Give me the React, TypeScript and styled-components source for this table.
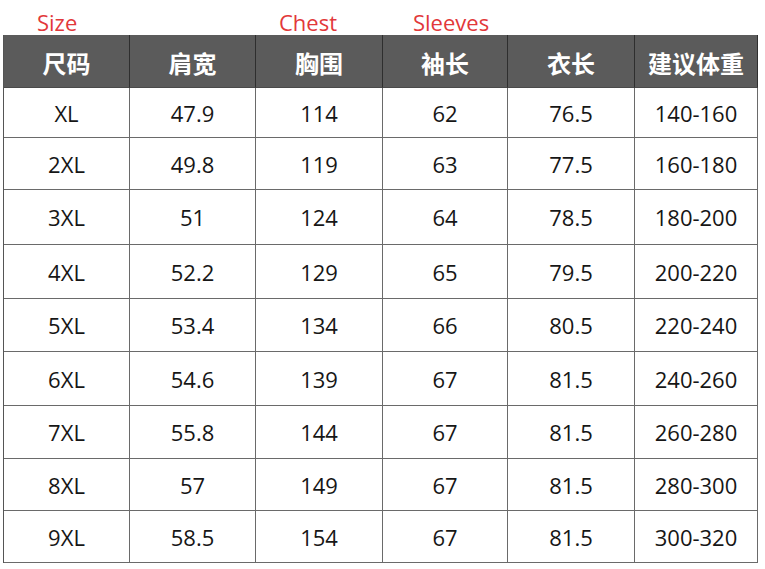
import React from "react";
import styled, { createGlobalStyle } from "styled-components";

const GlobalStyle = createGlobalStyle`
  html, body {
    margin: 0;
    padding: 0;
    background: #ffffff;
  }
`;

const COLUMNS = "126px 126px 127px 125px 127px 123px";
const ROW_HEIGHTS = [50, 52, 55, 54, 53, 54, 53, 52, 52];

const headers = ["尺码", "肩宽", "胸围", "袖长", "衣长", "建议体重"];

const rows: string[][] = [
  ["XL", "47.9", "114", "62", "76.5", "140-160"],
  ["2XL", "49.8", "119", "63", "77.5", "160-180"],
  ["3XL", "51", "124", "64", "78.5", "180-200"],
  ["4XL", "52.2", "129", "65", "79.5", "200-220"],
  ["5XL", "53.4", "134", "66", "80.5", "220-240"],
  ["6XL", "54.6", "139", "67", "81.5", "240-260"],
  ["7XL", "55.8", "144", "67", "81.5", "260-280"],
  ["8XL", "57", "149", "67", "81.5", "280-300"],
  ["9XL", "58.5", "154", "67", "81.5", "300-320"]
];

const Page = styled.div`
  width: 765px;
  height: 569px;
  padding-left: 3px;
  box-sizing: border-box;
`;

const LabelRow = styled.div`
  display: grid;
  grid-template-columns: ${COLUMNS};
  height: 35px;
  padding-left: 1px;
  box-sizing: border-box;
`;

const Label = styled.div<{ $col: number; $offset: number }>`
  grid-column: ${(p) => p.$col};
  padding-left: ${(p) => p.$offset}px;
  padding-top: 7px;
  font-family: "Open Sans", "Liberation Sans", sans-serif;
  font-size: 22px;
  line-height: 30px;
  color: #e2383a;
  white-space: nowrap;
`;

const Table = styled.div`
  display: grid;
  grid-template-columns: ${COLUMNS};
  grid-template-rows: 53px ${ROW_HEIGHTS.map((h) => h + "px").join(" ")};
  border-left: 1px solid #555555;
  width: 755px;
  box-sizing: border-box;
`;

const HeadCell = styled.div`
  display: flex;
  align-items: center;
  justify-content: center;
  background: #5b5b5b;
  border-right: 1px solid #2e2e2e;
  border-bottom: 1px solid #4a4a4a;
  box-sizing: border-box;
  padding-top: 3px;
  font-family: "Noto Sans CJK SC", "Noto Sans", sans-serif;
  font-weight: 700;
  font-size: 24px;
  color: #ffffff;
`;

const Cell = styled.div`
  display: flex;
  align-items: center;
  justify-content: center;
  border-right: 1px solid #6a6a6a;
  border-bottom: 1px solid #6a6a6a;
  box-sizing: border-box;
  font-family: "Open Sans", "Liberation Sans", sans-serif;
  font-size: 22px;
  color: #161616;
`;

export default function App() {
  return (
    <Page>
      <GlobalStyle />
      <LabelRow>
        <Label $col={1} $offset={33}>Size</Label>
        <Label $col={3} $offset={23}>Chest</Label>
        <Label $col={4} $offset={30}>Sleeves</Label>
      </LabelRow>
      <Table>
        {headers.map((h) => (
          <HeadCell key={h}>{h}</HeadCell>
        ))}
        {rows.map((r, i) =>
          r.map((v, j) => <Cell key={i + "-" + j}>{v}</Cell>)
        )}
      </Table>
    </Page>
  );
}
